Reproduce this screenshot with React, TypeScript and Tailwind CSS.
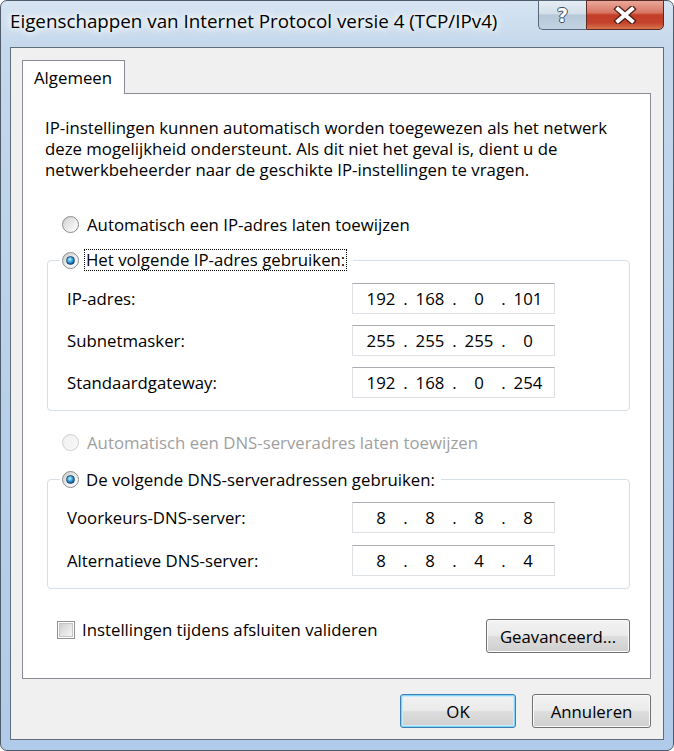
import React from "react";

function Radio({ checked, disabled }: { checked?: boolean; disabled?: boolean }) {
  return (
    <span
      className={`flex items-center justify-center w-[17px] h-[17px] shrink-0 rounded-full border ${
        disabled
          ? "border-[#cfcfcf] bg-[linear-gradient(135deg,#ececec,#fbfbfb)]"
          : "border-[#8c8c8c] bg-[linear-gradient(135deg,#c9c9c9_0%,#eeeeee_55%,#ffffff_100%)]"
      }`}
    >
      {checked ? (
        <span className="w-[9px] h-[9px] rounded-full border border-[#1b4a73] bg-[radial-gradient(circle_at_40%_35%,#c4f0ff_0%,#49b3ea_35%,#11599c_75%,#0b3763_100%)]" />
      ) : (
        <span
          className={`w-[11px] h-[11px] rounded-full ${
            disabled ? "bg-[#f4f4f4]" : "bg-[linear-gradient(135deg,#d9d9d9,#fafafa)]"
          }`}
        />
      )}
    </span>
  );
}

function Checkbox() {
  return (
    <span className="flex items-center justify-center w-[18px] h-[18px] shrink-0 border border-[#8e8f8f] bg-white">
      <span className="w-[14px] h-[14px] border border-[#c4c4c4] bg-[linear-gradient(135deg,#cfcfcf,#f6f6f6)]" />
    </span>
  );
}

function IpBox({ parts }: { parts: string[] }) {
  return (
    <div className="w-[203px] h-[31px] border border-[#dde1e6] border-t-[#abadb3] bg-white flex items-center pl-[8px]">
      {parts.map((p, i) => (
        <React.Fragment key={i}>
          {i > 0 && <span className="w-[9px] text-center">.</span>}
          <span className="w-[40px] text-center">{p}</span>
        </React.Fragment>
      ))}
    </div>
  );
}

function Row({ label, parts }: { label: string; parts: string[] }) {
  return (
    <div className="flex items-center h-[31px]">
      <span className="w-[285px]">{label}</span>
      <IpBox parts={parts} />
    </div>
  );
}

function Button({
  children,
  width,
  isDefault,
}: {
  children: React.ReactNode;
  width: string;
  isDefault?: boolean;
}) {
  return (
    <div
      className={`${width} h-[34px] rounded-[3px] border flex items-center justify-center bg-[linear-gradient(180deg,#f2f2f2_0%,#ebebeb_48%,#dddddd_52%,#cfcfcf_100%)] ${
        isDefault
          ? "border-[#3c7fb1] shadow-[inset_0_0_0_1px_#7fd3f5,inset_0_0_0_2px_#c8ecfb]"
          : "border-[#707070] shadow-[inset_0_0_0_1px_#fbfbfb]"
      }`}
    >
      {children}
    </div>
  );
}

export default function App() {
  return (
    <div className="w-[674px] h-[751px] bg-white font-['Open_Sans',sans-serif] text-[16.8px] leading-[21px] text-black">
      <div className="w-full h-full rounded-[7px] border border-[#4f5b68] bg-[linear-gradient(180deg,#d6e4f2_0%,#c5d8ec_6%,#bad2eb_40%,#b0cbe9_100%)] flex flex-col px-[9px] pb-[10px]">
        {/* title bar */}
        <div className="h-[46px] flex items-start justify-between shrink-0">
          <div className="pt-[8px] text-[18.8px] leading-[24px] text-black [text-shadow:0_0_6px_#fff,0_0_10px_#fff,0_0_14px_#fff]">
            Eigenschappen van Internet Protocol versie 4 (TCP/IPv4)
          </div>
          <div className="flex -mt-px">
            <div className="w-[48px] h-[30px] rounded-bl-[5px] border border-r-0 border-[#56677a] bg-[linear-gradient(180deg,#e6edf4_0%,#d3dfea_45%,#b7c8d9_50%,#c3d3e2_100%)] flex items-center justify-center">
              <span className="text-white font-bold text-[19px] leading-none font-['DejaVu_Sans',sans-serif] [text-shadow:1px_0_0_#3b4a5a,-1px_0_0_#3b4a5a,0_1px_0_#3b4a5a,0_-1px_0_#3b4a5a]">
                ?
              </span>
            </div>
            <div className="w-[78px] h-[30px] rounded-br-[5px] border border-[#5a2b24] bg-[linear-gradient(180deg,#e9a89a_0%,#d87563_42%,#c33d27_50%,#c4432c_78%,#d8774f_100%)] flex items-center justify-center">
              <svg width="24" height="18" viewBox="0 0 24 18">
                <path d="M5 3 L19 15 M19 3 L5 15" stroke="#4a1e16" strokeWidth="6.5" strokeLinecap="square" />
                <path d="M5 3 L19 15 M19 3 L5 15" stroke="#ffffff" strokeWidth="4" strokeLinecap="square" />
              </svg>
            </div>
          </div>
        </div>

        {/* client area */}
        <div className="flex-1 border border-[#5f6d7b] bg-[#f0f0f0] flex flex-col pt-[12px] pl-[11px] pr-[12px]">
          {/* tab */}
          <div className="flex">
            <div className="w-[103px] h-[34px] pl-[11px] border border-b-0 border-[#898c95] bg-white flex items-center relative z-10 -mb-px">
              Algemeen
            </div>
          </div>
          {/* panel */}
          <div className="flex-1 border border-[#898c95] bg-white flex flex-col pt-[23px]">
            <p className="pl-[22px]">
              IP-instellingen kunnen automatisch worden toegewezen als het netwerk
              <br />
              deze mogelijkheid ondersteunt. Als dit niet het geval is, dient u de
              <br />
              netwerkbeheerder naar de geschikte IP-instellingen te vragen.
            </p>

            <div className="mt-[34px] flex items-center h-[21px] pl-[39px] gap-[8px]">
              <Radio />
              <span>Automatisch een IP-adres laten toewijzen</span>
            </div>

            <fieldset className="mt-[13px] ml-[24px] mr-[20px] border border-[#d5dfe5] rounded-[4px] p-0">
              <legend className="ml-[12px] pl-[2px] pr-[6px]">
                <div className="flex items-center h-[24px] gap-[5px]">
                  <Radio checked />
                  <span className="h-[22px] leading-[20px] px-[1px] border border-dotted border-black">
                    Het volgende IP-adres gebruiken:
                  </span>
                </div>
              </legend>
              <div className="pl-[19px] pt-[11px] pb-[12px] flex flex-col gap-[11px]">
                <Row label="IP-adres:" parts={["192", "168", "0", "101"]} />
                <Row label="Subnetmasker:" parts={["255", "255", "255", "0"]} />
                <Row label="Standaardgateway:" parts={["192", "168", "0", "254"]} />
              </div>
            </fieldset>

            <div className="mt-[21px] flex items-center h-[21px] pl-[39px] gap-[8px] text-[#a0a0a0]">
              <Radio disabled />
              <span>Automatisch een DNS-serveradres laten toewijzen</span>
            </div>

            <fieldset className="mt-[14px] ml-[24px] mr-[20px] border border-[#d5dfe5] rounded-[4px] p-0">
              <legend className="ml-[12px] pl-[2px] pr-[6px]">
                <div className="flex items-center h-[24px] gap-[7px]">
                  <Radio checked />
                  <span>De volgende DNS-serveradressen gebruiken:</span>
                </div>
              </legend>
              <div className="pl-[19px] pt-[11px] pb-[12px] flex flex-col gap-[12px]">
                <Row label="Voorkeurs-DNS-server:" parts={["8", "8", "8", "8"]} />
                <Row label="Alternatieve DNS-server:" parts={["8", "8", "4", "4"]} />
              </div>
            </fieldset>

            <div className="mt-[30px] ml-[34px] mr-[20px] flex justify-between items-start">
              <div className="flex items-center h-[21px] gap-[7px]">
                <Checkbox />
                <span>Instellingen tijdens afsluiten valideren</span>
              </div>
              <Button width="w-[144px]">Geavanceerd...</Button>
            </div>
          </div>

          {/* bottom buttons */}
          <div className="mt-[15px] mb-[11px] flex justify-end gap-[16px]">
            <Button width="w-[116px]" isDefault>
              OK
            </Button>
            <Button width="w-[119px]">Annuleren</Button>
          </div>
        </div>
      </div>
    </div>
  );
}
